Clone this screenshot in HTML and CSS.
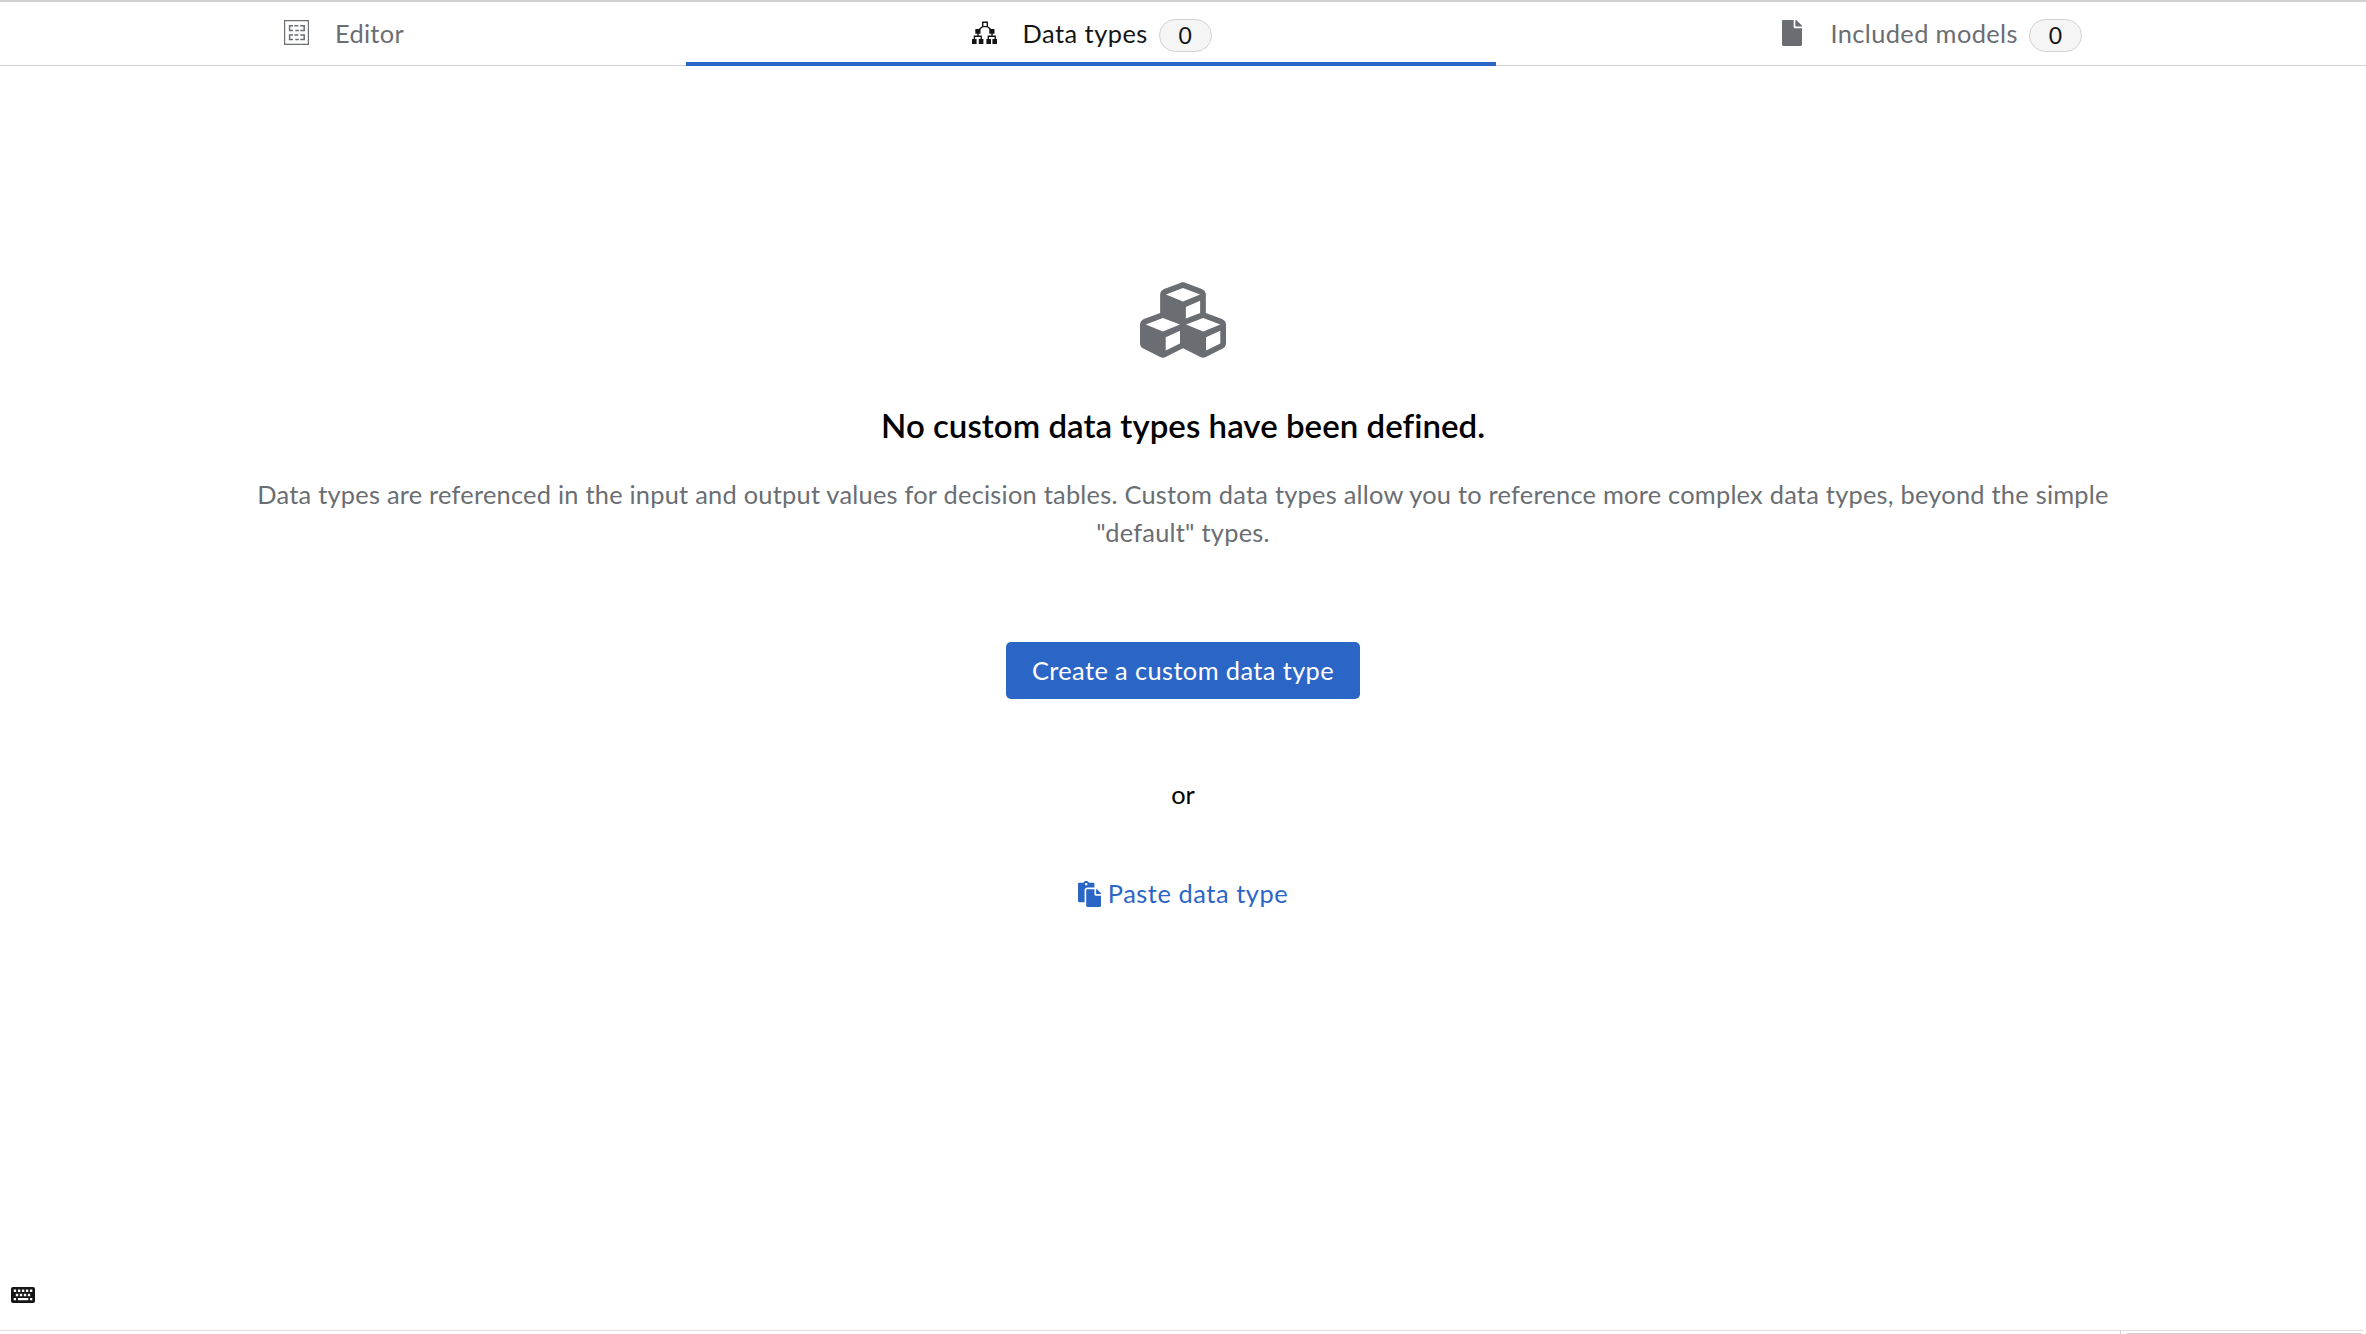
FILE: index.html
```html
<!DOCTYPE html>
<html lang="en">
<head>
<meta charset="utf-8">
<title>Data types</title>
<link rel="stylesheet" href="styles.css">
</head>
<body>
<nav class="tabs">
  <button class="tab tab-editor">
    <svg class="icon-editor" viewBox="0 0 25 25" fill="none" stroke="currentColor"><path stroke-width="1.2" d="M.6.6h23.8v23.8H.6z"/><path stroke-width="1.5" d="M9 5.8H5.6v4.6H9M16.3 5.8h3.9v4.6h-3.9M9 15H5.6v4.6H9M16.3 15h3.9v4.6h-3.9M10.3 5.8h4M11.3 10.4h3.5M10.3 15h4M11.3 19.6h3.5"/></svg>
    <span class="label">Editor</span>
  </button>
  <button class="tab tab-types active">
    <svg class="icon-types" viewBox="0 0 25 23" fill="currentColor"><path fill="none" stroke="currentColor" stroke-width="1.4" d="M10.7 1.2h4.6v4.4h-4.6zM11 5.2 6 9.5M15 5.2l5 4.3M6 12v3M2.4 18v-2.8h6.8V18M20 12v3M16.3 18v-2.8h6.9V18"/><rect x="3.3" y="8" width="5.2" height="4.8" rx=".6"/><rect x="17.3" y="8" width="5.2" height="4.8" rx=".6"/><path d="M0 18h4.6v5H0zM6.8 18h4.6v5H6.8zM14.4 18H19v5h-4.6zM20.4 18H25v5h-4.6z"/></svg>
    <span class="label">Data types</span>
    <span class="badge">0</span>
  </button>
  <button class="tab tab-models">
    <svg class="icon-file" viewBox="0 0 384 512" preserveAspectRatio="none" fill="currentColor"><path d="M224 136V0H24C10.7 0 0 10.7 0 24v464c0 13.3 10.7 24 24 24h336c13.3 0 24-10.7 24-24V160H248c-13.2 0-24-10.8-24-24zm160-14.1v6.1H256V0h6.1c6.4 0 12.5 2.5 17 7l97.9 98c4.5 4.5 7 10.6 7 16.9z"/></svg>
    <span class="label">Included models</span>
    <span class="badge">0</span>
  </button>
</nav>
<main class="empty">
  <svg class="icon-cubes" viewBox="0 32 512 448" fill="currentColor"><path d="M488.6 250.2L392 214V105.5c0-15-9.3-28.4-23.4-33.7l-100-37.5c-8.1-3.1-17.1-3.1-25.3 0l-100 37.5c-14.1 5.3-23.4 18.7-23.4 33.7V214l-96.6 36.2C9.3 255.5 0 268.9 0 283.9V394c0 13.6 7.7 26.1 19.9 32.2l100 50c10.1 5.1 22.1 5.1 32.2 0l103.9-52 103.9 52c10.1 5.1 22.1 5.1 32.2 0l100-50c12.2-6.1 19.9-18.6 19.9-32.2V283.9c0-15-9.3-28.4-23.4-33.7zM358 214.8l-85 31.9v-68.2l85-37v73.3zM154 104.1l102-38.2 102 38.2v.6l-102 41.4-102-41.4v-.6zm84 291.1l-85 42.5v-79.1l85-38.8v75.4zm0-112l-102 41.4-102-41.4v-.6l102-38.2 102 38.2v.6zm240 112l-85 42.5v-79.1l85-38.8v75.4zm0-112l-102 41.4-102-41.4v-.6l102-38.2 102 38.2v.6z"/></svg>
  <h1 class="title">No custom data types have been defined.</h1>
  <p class="description">Data types are referenced in the input and output values for decision tables. Custom data types allow you to reference more complex data types, beyond the simple "default" types.</p>
  <button class="create">Create a custom data type</button>
  <p class="or">or</p>
  <button class="paste">
    <svg class="icon-paste" viewBox="0 0 448 512" preserveAspectRatio="none" fill="currentColor"><path d="M128 184c0-30.879 25.122-56 56-56h136V56c0-13.255-10.745-24-24-24h-80.61C204.306 12.89 183.637 0 160 0s-44.306 12.89-55.39 32H24C10.745 32 0 42.745 0 56v336c0 13.255 10.745 24 24 24h104V184zm32-144c13.255 0 24 10.745 24 24s-10.745 24-24 24-24-10.745-24-24 10.745-24 24-24zm184 248h104v200c0 13.255-10.745 24-24 24H184c-13.255 0-24-10.745-24-24V184c0-13.255 10.745-24 24-24h136v104c0 13.2 10.8 24 24 24zm104-38.059V256h-96v-96h6.059a24 24 0 0 1 16.97 7.029l65.941 65.941a24.002 24.002 0 0 1 7.03 16.971z"/></svg>
    <span class="paste-label">Paste data type</span>
  </button>
</main>
<div class="shortcuts">
  <svg class="icon-keyboard" viewBox="0 0 24 16"><rect width="24" height="16" rx="2" fill="#151515"/><path fill="#fff" d="M2.7 2.6h2.4V5H2.7zM6.9 2.6h2.4V5H6.9zM10.9 2.6h2.4V5h-2.4zM14.9 2.6h2.4V5h-2.4zM18.9 2.6h2.4V5h-2.4zM4.8 6.8h2.4v2.4H4.8zM8.8 6.8h2.4v2.4H8.8zM12.8 6.8h2.4v2.4h-2.4zM16.8 6.8h2.4v2.4h-2.4zM2.7 11h2.4v2.3H2.7zM6.9 11h10.4v2.3H6.9zM18.9 11h2.4v2.3h-2.4z"/></svg>
</div>
<footer class="footer"><div class="footer-panel"></div></footer>
</body>
</html>
```
FILE: styles.css
```css
* { box-sizing: border-box; }

body {
  display: flex;
  flex-direction: column;
  height: 1334px;
  margin: 0;
  overflow: hidden;
  background: #fff;
  color: #000;
  font: 25.4px/38px Lato, "Liberation Sans", sans-serif;
}

svg { display: block; flex: none; }
p, h1 { margin: 0; font-weight: 400; }

button {
  border: 0;
  background: none;
  color: inherit;
  font: inherit;
  white-space: nowrap;
  padding: 0;
}

.tabs {
  display: grid;
  grid-template-columns: 686px 810px 870px;
  height: 66px;
  border-top: 2px solid #d2d2d2;
}

.tab {
  display: flex;
  align-items: flex-start;
  padding-top: 12px;
  border-bottom: 1px solid #d2d2d2;
  color: #6a6e73;
}

.tab-editor { padding-left: 284px; letter-spacing: .3px; }
.tab-types { padding-left: 286px; letter-spacing: .48px; }
.tab-models { padding-left: 286px; letter-spacing: .38px; }
.tab.active { border-bottom: 4px solid #2b66c6; color: #151515; }

.icon-editor { width: 25px; height: 25px; margin: 6px 26px 0 0; }
.icon-types { width: 25px; height: 23px; margin: 7px 25.5px 0 0; }
.icon-file { width: 20px; height: 26px; margin: 6px 28.5px 0 0; }

.badge {
  width: 53px;
  height: 33px;
  margin: 5px 0 0 11px;
  border: 1px solid #d2d2d2;
  border-radius: 17px;
  background: #f5f5f5;
  color: #151515;
  font-size: 23px;
  line-height: 30px;
  text-align: center;
  letter-spacing: 0;
}

.empty {
  display: flex;
  flex: 1;
  flex-direction: column;
  align-items: center;
  padding-top: 216px;
  text-align: center;
}

.icon-cubes { width: 86px; height: 76px; color: #6a6e73; }

.title {
  margin-top: 46px;
  font-size: 33px;
  font-weight: 600;
  line-height: 43px;
  letter-spacing: .03px;
}

.description {
  width: 1870px;
  margin-top: 28px;
  color: #6a6e73;
  letter-spacing: .238px;
}

.create {
  width: 354px;
  height: 57px;
  margin-top: 91px;
  padding-bottom: 2px;
  border-radius: 5px;
  background: #2b66c6;
  color: #fff;
  letter-spacing: .39px;
}

.or { margin-top: 76px; }

.paste {
  display: flex;
  gap: 7px;
  margin-top: 61px;
  color: #2b66c6;
}

.icon-paste { width: 23px; height: 26px; margin-top: 7px; }
.paste-label { letter-spacing: .56px; }

.shortcuts { height: 43px; padding-left: 11px; }
.icon-keyboard { width: 24px; height: 16px; }

.footer {
  height: 4px;
  margin-right: 3px;
  padding-left: 2120px;
  border-top: 1px solid #dcdcdc;
}

.footer-panel {
  height: 3px;
  padding: 2px 2px 0 6px;
  border-left: 1px solid #d2d2d2;
}

.footer-panel::after {
  content: "";
  display: block;
  height: 1px;
  background: #d2d2d2;
}
```
